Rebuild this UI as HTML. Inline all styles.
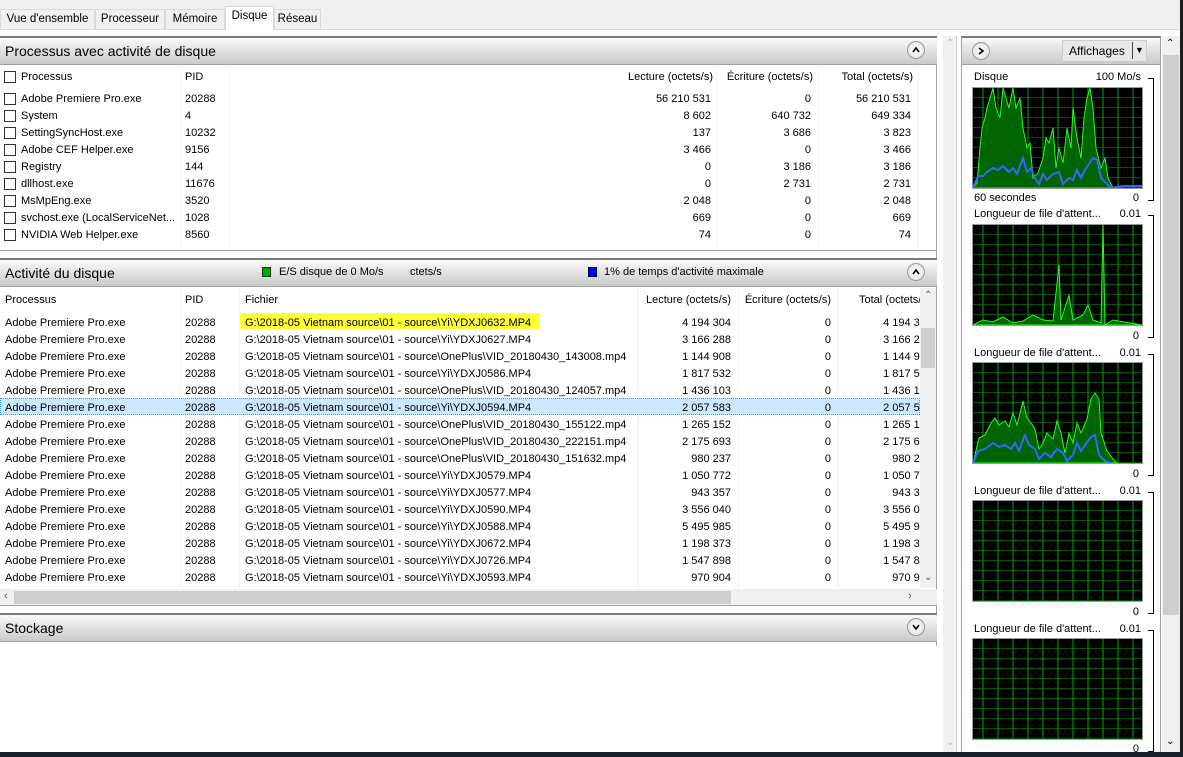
<!DOCTYPE html>
<html><head><meta charset="utf-8"><style>
*{box-sizing:border-box;margin:0;padding:0}
body{width:1183px;height:757px;overflow:hidden;background:#fff;font-family:"Liberation Sans",sans-serif;font-size:11px;color:#000;position:relative}
.a{position:absolute;white-space:nowrap}
.tabs{position:absolute;left:0;top:0;width:1183px;height:30px;background:#f0f0f0;border-bottom:1px solid #d9d9d9}
.tab{position:absolute;top:9px;height:21px;border:1px solid #d9d9d9;background:#f0f0f0;font-size:11.5px;padding:3px 0 0;white-space:nowrap;overflow:hidden;text-align:center}
.hdr{position:absolute;left:0;width:937px;height:29px;background:linear-gradient(#fafafa,#e6e6e6 40%,#c9c9c9);border-top:2px solid #7a7a7a;border-bottom:1px solid #a0a0a0;font-size:14px;padding:5px 5px}
.btn{position:absolute;width:18px;height:18px;border:1px solid #999;border-radius:50%;background:radial-gradient(#fff,#ddd)}
.btn svg{position:absolute;left:4px;top:4px}
.cb{position:absolute;left:4px;width:12px;height:12px;border:1px solid #333;background:#fff}
.r{text-align:right}
.vl{position:absolute;width:1px;background:#eef3fa}
.g{position:absolute;left:972px;width:171px;height:102px;border:1px solid #999;background:#000}
.br{position:absolute;left:1148px;width:6px;border:1px solid #000;border-left:none}
</style></head><body>
<div class="tabs">
<div class="tab" style="left:0;width:95px">Vue d'ensemble</div>
<div class="tab" style="left:95px;width:70px">Processeur</div>
<div class="tab" style="left:165px;width:60px">Mémoire</div>
<div class="tab" style="left:225px;top:6px;height:25px;width:49px;background:#fff;border-bottom:none">Disque</div>
<div class="tab" style="left:274px;width:47px">Réseau</div>
</div>
<div class="a" style="left:936px;top:36px;width:1px;height:610px;background:#a0a0a0"></div>
<div class="a" style="left:943px;top:36px;width:14px;height:716px;background:#f0f0f0;border-right:1px solid #ccc"></div>
<div class="a" style="left:946px;top:38px;color:#bbb;font-size:10px">⌃</div>
<div class="a" style="left:946px;top:737px;color:#bbb;font-size:10px">⌄</div>

<div class="hdr" style="top:36px">Processus avec activité de disque</div>
<div class="btn" style="left:907px;top:41px"><svg width="8" height="8"><path d="M1 6L4 2 7 6" stroke="#000" stroke-width="1.6" fill="none"/></svg></div>
<div class="vl" style="left:180px;top:66px;height:184px"></div>
<div class="vl" style="left:229px;top:66px;height:184px"></div>
<div class="vl" style="left:716px;top:66px;height:184px"></div>
<div class="vl" style="left:818px;top:66px;height:184px"></div>
<div class="vl" style="left:918px;top:66px;height:184px"></div>
<div class="a" style="left:0;top:250px;width:937px;height:1px;background:#a0a0a0"></div>
<div class="cb" style="top:71px"></div><div class="a" style="left:21px;top:71px">Processus</div><div class="a" style="left:185px;top:71px">PID</div>
<div class="a r" style="right:470px;top:71px">Lecture (octets/s)</div><div class="a r" style="right:370px;top:71px">Écriture (octets/s)</div><div class="a r" style="right:270px;top:71px">Total (octets/s)</div>

<div class="cb" style="top:93px"></div><div class="a" style="left:21px;top:93px">Adobe Premiere Pro.exe</div><div class="a" style="left:185px;top:93px">20288</div><div class="a r" style="right:472px;top:93px">56 210 531</div><div class="a r" style="right:372px;top:93px">0</div><div class="a r" style="right:272px;top:93px">56 210 531</div>
<div class="cb" style="top:110px"></div><div class="a" style="left:21px;top:110px">System</div><div class="a" style="left:185px;top:110px">4</div><div class="a r" style="right:472px;top:110px">8 602</div><div class="a r" style="right:372px;top:110px">640 732</div><div class="a r" style="right:272px;top:110px">649 334</div>
<div class="cb" style="top:127px"></div><div class="a" style="left:21px;top:127px">SettingSyncHost.exe</div><div class="a" style="left:185px;top:127px">10232</div><div class="a r" style="right:472px;top:127px">137</div><div class="a r" style="right:372px;top:127px">3 686</div><div class="a r" style="right:272px;top:127px">3 823</div>
<div class="cb" style="top:144px"></div><div class="a" style="left:21px;top:144px">Adobe CEF Helper.exe</div><div class="a" style="left:185px;top:144px">9156</div><div class="a r" style="right:472px;top:144px">3 466</div><div class="a r" style="right:372px;top:144px">0</div><div class="a r" style="right:272px;top:144px">3 466</div>
<div class="cb" style="top:161px"></div><div class="a" style="left:21px;top:161px">Registry</div><div class="a" style="left:185px;top:161px">144</div><div class="a r" style="right:472px;top:161px">0</div><div class="a r" style="right:372px;top:161px">3 186</div><div class="a r" style="right:272px;top:161px">3 186</div>
<div class="cb" style="top:178px"></div><div class="a" style="left:21px;top:178px">dllhost.exe</div><div class="a" style="left:185px;top:178px">11676</div><div class="a r" style="right:472px;top:178px">0</div><div class="a r" style="right:372px;top:178px">2 731</div><div class="a r" style="right:272px;top:178px">2 731</div>
<div class="cb" style="top:195px"></div><div class="a" style="left:21px;top:195px">MsMpEng.exe</div><div class="a" style="left:185px;top:195px">3520</div><div class="a r" style="right:472px;top:195px">2 048</div><div class="a r" style="right:372px;top:195px">0</div><div class="a r" style="right:272px;top:195px">2 048</div>
<div class="cb" style="top:212px"></div><div class="a" style="left:21px;top:212px">svchost.exe (LocalServiceNet...</div><div class="a" style="left:185px;top:212px">1028</div><div class="a r" style="right:472px;top:212px">669</div><div class="a r" style="right:372px;top:212px">0</div><div class="a r" style="right:272px;top:212px">669</div>
<div class="cb" style="top:229px"></div><div class="a" style="left:21px;top:229px">NVIDIA Web Helper.exe</div><div class="a" style="left:185px;top:229px">8560</div><div class="a r" style="right:472px;top:229px">74</div><div class="a r" style="right:372px;top:229px">0</div><div class="a r" style="right:272px;top:229px">74</div>

<div class="hdr" style="top:258px">Activité du disque</div>
<div class="a" style="left:262px;top:267px;width:9px;height:10px;background:#0a0;border:1px solid #040"></div>
<div class="a" style="left:279px;top:266px">E/S disque de 0 Mo/s</div><div class="a" style="left:410px;top:266px">ctets/s</div>
<div class="a" style="left:588px;top:267px;width:9px;height:10px;background:#00f;border:1px solid #004"></div>
<div class="a" style="left:604px;top:266px">1% de temps d'activité maximale</div>
<div class="btn" style="left:907px;top:263px"><svg width="8" height="8"><path d="M1 6L4 2 7 6" stroke="#000" stroke-width="1.6" fill="none"/></svg></div>
<div class="vl" style="left:180px;top:288px;height:300px"></div>
<div class="vl" style="left:239px;top:288px;height:300px"></div>
<div class="vl" style="left:638px;top:288px;height:300px"></div>
<div class="vl" style="left:738px;top:288px;height:300px"></div>
<div class="vl" style="left:838px;top:288px;height:300px"></div>
<div class="a" style="left:240px;top:313px;width:300px;height:16px;background:#ffff33"></div>
<div class="a" style="left:0;top:398px;width:920px;height:17px;background:#cce8ff;border:1px dotted #3399ff"></div>
<div class="a" style="left:5px;top:294px">Processus</div><div class="a" style="left:185px;top:294px">PID</div><div class="a" style="left:245px;top:294px">Fichier</div>
<div class="a r" style="right:452px;top:294px">Lecture (octets/s)</div><div class="a r" style="right:352px;top:294px">Écriture (octets/s)</div><div class="a" style="left:859px;top:294px;width:61px;overflow:hidden">Total (octets/s)</div>
<div class="a" style="left:5px;top:315px;line-height:17px">Adobe Premiere Pro.exe<br>Adobe Premiere Pro.exe<br>Adobe Premiere Pro.exe<br>Adobe Premiere Pro.exe<br>Adobe Premiere Pro.exe<br>Adobe Premiere Pro.exe<br>Adobe Premiere Pro.exe<br>Adobe Premiere Pro.exe<br>Adobe Premiere Pro.exe<br>Adobe Premiere Pro.exe<br>Adobe Premiere Pro.exe<br>Adobe Premiere Pro.exe<br>Adobe Premiere Pro.exe<br>Adobe Premiere Pro.exe<br>Adobe Premiere Pro.exe<br>Adobe Premiere Pro.exe</div>
<div class="a" style="left:185px;top:315px;line-height:17px">20288<br>20288<br>20288<br>20288<br>20288<br>20288<br>20288<br>20288<br>20288<br>20288<br>20288<br>20288<br>20288<br>20288<br>20288<br>20288</div>
<div class="a" style="left:245px;top:315px;line-height:17px">G:\2018-05 Vietnam source\01 - source\Yi\YDXJ0632.MP4<br>G:\2018-05 Vietnam source\01 - source\Yi\YDXJ0627.MP4<br>G:\2018-05 Vietnam source\01 - source\OnePlus\VID_20180430_143008.mp4<br>G:\2018-05 Vietnam source\01 - source\Yi\YDXJ0586.MP4<br>G:\2018-05 Vietnam source\01 - source\OnePlus\VID_20180430_124057.mp4<br>G:\2018-05 Vietnam source\01 - source\Yi\YDXJ0594.MP4<br>G:\2018-05 Vietnam source\01 - source\OnePlus\VID_20180430_155122.mp4<br>G:\2018-05 Vietnam source\01 - source\OnePlus\VID_20180430_222151.mp4<br>G:\2018-05 Vietnam source\01 - source\OnePlus\VID_20180430_151632.mp4<br>G:\2018-05 Vietnam source\01 - source\Yi\YDXJ0579.MP4<br>G:\2018-05 Vietnam source\01 - source\Yi\YDXJ0577.MP4<br>G:\2018-05 Vietnam source\01 - source\Yi\YDXJ0590.MP4<br>G:\2018-05 Vietnam source\01 - source\Yi\YDXJ0588.MP4<br>G:\2018-05 Vietnam source\01 - source\Yi\YDXJ0672.MP4<br>G:\2018-05 Vietnam source\01 - source\Yi\YDXJ0726.MP4<br>G:\2018-05 Vietnam source\01 - source\Yi\YDXJ0593.MP4</div>
<div class="a r" style="right:452px;top:315px;line-height:17px">4 194 304<br>3 166 288<br>1 144 908<br>1 817 532<br>1 436 103<br>2 057 583<br>1 265 152<br>2 175 693<br>980 237<br>1 050 772<br>943 357<br>3 556 040<br>5 495 985<br>1 198 373<br>1 547 898<br>970 904</div>
<div class="a r" style="right:352px;top:315px;line-height:17px">0<br>0<br>0<br>0<br>0<br>0<br>0<br>0<br>0<br>0<br>0<br>0<br>0<br>0<br>0<br>0</div>
<div class="a" style="left:850px;top:315px;line-height:17px;width:70px;height:272px;overflow:hidden"><div class="a r" style="right:-12px;top:0">4 194 304<br>3 166 288<br>1 144 908<br>1 817 532<br>1 436 103<br>2 057 583<br>1 265 152<br>2 175 693<br>980 237<br>1 050 772<br>943 357<br>3 556 040<br>5 495 985<br>1 198 373<br>1 547 898<br>970 904</div></div>
<div class="a" style="left:920px;top:288px;width:16px;height:300px;background:#f0f0f0"></div>
<div class="a" style="left:921px;top:328px;width:14px;height:40px;background:#cdcdcd"></div>
<div class="a" style="left:924px;top:290px;font-size:10px;color:#555">⌃</div>
<div class="a" style="left:924px;top:572px;font-size:10px;color:#555">⌄</div>
<div class="a" style="left:0;top:589px;width:937px;height:17px;background:#f0f0f0;border-bottom:1px solid #a0a0a0"></div>
<div class="a" style="left:14px;top:591px;width:717px;height:13px;background:#cdcdcd"></div>
<div class="a" style="left:4px;top:590px;font-size:11px;color:#555">‹</div>
<div class="a" style="left:908px;top:590px;font-size:11px;color:#555">›</div>
<div class="hdr" style="top:613px">Stockage</div>
<div class="btn" style="left:907px;top:618px"><svg width="8" height="8"><path d="M1 2L4 6 7 2" stroke="#000" stroke-width="1.6" fill="none"/></svg></div>

<div class="a" style="left:961px;top:36px;width:200px;height:716px;border:1px solid #a0a0a0;border-top:2px solid #7a7a7a;border-bottom:none"></div>
<div class="a" style="left:962px;top:38px;width:198px;height:27px;background:linear-gradient(#fafafa,#e4e4e4 40%,#cacaca);border-bottom:1px solid #a0a0a0"></div>
<div class="btn" style="left:972px;top:42px"><svg width="8" height="8"><path d="M2 1L6 4 2 7" stroke="#000" stroke-width="1.6" fill="none"/></svg></div>
<div class="a" style="left:1062px;top:40px;width:85px;height:22px;background:#e8e8e8;border:1px solid #ccc;font-size:12px;padding:3px 0 0 6px">Affichages</div>
<div class="a" style="left:1132px;top:42px;width:1px;height:17px;background:#444"></div>
<div class="a" style="left:1135px;top:45px;font-size:9px">▼</div>
<div class="a" style="left:1162px;top:36px;width:18px;height:716px;background:#f0f0f0"></div>
<div class="a" style="left:1163px;top:55px;width:16px;height:560px;background:#cdcdcd"></div>
<div class="a" style="left:1166px;top:38px;font-size:10px">⌃</div>
<div class="a" style="left:1166px;top:736px;font-size:10px">⌄</div>
<div class="a" style="left:1180px;top:0;width:3px;height:757px;background:#1c1c1c"></div>
<div class="a" style="left:0;top:752px;width:1183px;height:5px;background:#1a1e26"></div>

<svg width="0" height="0" style="position:absolute"><defs>
<pattern id="gp" x="0" y="0" width="15" height="10" patternUnits="userSpaceOnUse"><path d="M10 0V10M0 10H15" stroke="#008a00" stroke-width="1.2" fill="none"/></pattern>
</defs></svg>

<div class="a" style="left:974px;top:71px">Disque</div><div class="a r" style="right:42px;top:71px">100 Mo/s</div>
<div class="br" style="top:78px;height:123px"></div>
<svg class="g" style="top:87px" viewBox="0 0 169 100" preserveAspectRatio="none"><rect width="169" height="100" fill="url(#gp)"/>
<path d="M0 100L4 95 7 60 9 40 12 30 14 20 17 10 20 0 23 20 27 30 30 0 33 10 36 20 40 0 43 20 47 10 50 40 54 60 57 55 60 90 65 85 70 70 73 50 76 55 80 40 83 80 86 60 90 75 94 40 98 60 100 20 104 50 108 70 111 30 114 10 117 0 120 20 123 60 128 80 132 70 135 90 140 100Z" fill="#006400" stroke="#2f2" stroke-width="1"/>
<path d="M0 100L5 88 10 88 14 84 20 80 25 82 30 78 36 84 40 80 44 86 50 70 54 84 58 80 62 90 66 96 70 86 74 92 80 86 86 84 90 96 96 90 100 92 104 82 108 90 112 82 116 76 120 70 124 72 128 90 132 94 138 100 150 98 169 98" fill="none" stroke="#36f" stroke-width="2"/></svg>
<div class="a" style="left:974px;top:192px">60 secondes</div><div class="a r" style="right:44px;top:192px">0</div>

<div class="a" style="left:974px;top:208px">Longueur de file d'attent...</div><div class="a r" style="right:42px;top:208px">0.01</div>
<div class="br" style="top:215px;height:123px"></div>
<svg class="g" style="top:224px" viewBox="0 0 169 100" preserveAspectRatio="none"><rect width="169" height="100" fill="url(#gp)"/>
<path d="M0 100L10 95 20 97 30 92 40 98 50 96 60 90 70 95 80 96 86 40 88 95 96 70 100 95 110 90 115 80 120 95 128 98 130 0 132 100 140 95 169 100Z" fill="#006400" stroke="#2f2"/></svg>
<div class="a r" style="right:44px;top:330px">0</div>

<div class="a" style="left:974px;top:347px">Longueur de file d'attent...</div><div class="a r" style="right:42px;top:347px">0.01</div>
<div class="br" style="top:354px;height:122px"></div>
<svg class="g" style="top:362px" viewBox="0 0 169 100" preserveAspectRatio="none"><rect width="169" height="100" fill="url(#gp)"/>
<path d="M0 100L6 75 12 72 18 60 22 55 26 62 32 58 36 64 40 50 44 62 50 38 54 55 58 60 62 66 66 86 70 80 74 70 80 76 84 58 88 70 92 90 96 70 100 80 104 60 108 70 114 56 118 36 122 30 126 36 128 70 134 88 140 96 144 100Z" fill="#006400" stroke="#2f2"/>
<path d="M0 100L5 88 12 86 20 80 26 84 32 82 38 86 42 80 46 88 52 72 56 82 62 86 66 96 72 90 78 94 84 86 90 90 94 98 100 92 104 80 108 88 112 82 118 74 122 72 126 92 132 98 138 100" fill="none" stroke="#36f" stroke-width="2"/></svg>
<div class="a r" style="right:44px;top:468px">0</div>

<div class="a" style="left:974px;top:485px">Longueur de file d'attent...</div><div class="a r" style="right:42px;top:485px">0.01</div>
<div class="br" style="top:492px;height:122px"></div>
<svg class="g" style="top:500px" viewBox="0 0 169 100" preserveAspectRatio="none"><rect width="169" height="100" fill="url(#gp)"/></svg>
<div class="a r" style="right:44px;top:606px">0</div>

<div class="a" style="left:974px;top:623px">Longueur de file d'attent...</div><div class="a r" style="right:42px;top:623px">0.01</div>
<div class="br" style="top:630px;height:122px"></div>
<svg class="g" style="top:638px" viewBox="0 0 169 100" preserveAspectRatio="none"><rect width="169" height="100" fill="url(#gp)"/></svg>
<div class="a r" style="right:44px;top:743px">0</div>
</body></html>
